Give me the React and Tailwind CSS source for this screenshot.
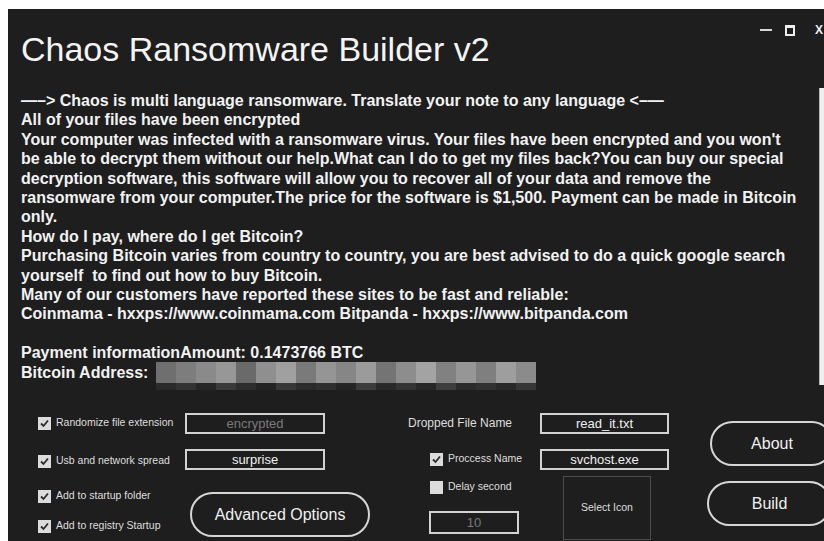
const NOTE_LINES = [
  '—–> Chaos is multi language ransomware. Translate your note to any language <–—',
  'All of your files have been encrypted',
  "Your computer was infected with a ransomware virus. Your files have been encrypted and you won't",
  'be able to decrypt them without our help.What can I do to get my files back?You can buy our special',
  'decryption software, this software will allow you to recover all of your data and remove the',
  'ransomware from your computer.The price for the software is $1,500. Payment can be made in Bitcoin',
  'only.',
  'How do I pay, where do I get Bitcoin?',
  'Purchasing Bitcoin varies from country to country, you are best advised to do a quick google search',
  'yourself  to find out how to buy Bitcoin.',
  'Many of our customers have reported these sites to be fast and reliable:',
  'Coinmama - hxxps://www.coinmama.com Bitpanda - hxxps://www.bitpanda.com',
  ' ',
  'Payment informationAmount: 0.1473766 BTC',
];

// greys of the pixelated wallet address
const MOSAIC_TOP = ['#6f6f6f', '#7d7d7d', '#8a8a8a', '#979797', '#6a6a6a', '#8f8f8f', '#a0a0a0', '#7a7a7a', '#959595', '#868686', '#9b9b9b', '#747474', '#8d8d8d', '#a3a3a3', '#818181', '#969696', '#7f7f7f', '#9e9e9e', '#8b8b8b'];
const MOSAIC_BOTTOM = ['#2a2a2a', '#333333', '#262626', '#3a3a3a', '#2e2e2e', '#242424', '#383838', '#2b2b2b', '#303030', '#252525', '#3c3c3c', '#292929', '#343434', '#272727', '#3d3d3d', '#2c2c2c', '#313131', '#282828', '#363636'];

const CheckBox = ({ checked = true }) => (
  <span className="w-[13px] h-[13px] bg-[#dcdcdc] flex items-center justify-center shrink-0">
    {checked && (
      <svg width="11" height="11" viewBox="0 0 11 11">
        <path d="M2 5.5L4.5 8L9 2.5" fill="none" stroke="#2b2b2b" strokeWidth="1.8" />
      </svg>
    )}
  </span>
);

const Option = ({ label, checked, className = '' }) => (
  <div className={`h-[22px] flex items-center gap-[5px] ${className}`}>
    <CheckBox checked={checked} />
    <span className="text-[10.5px] text-[#dedede] whitespace-nowrap">{label}</span>
  </div>
);

const TextBox = ({ value, dim, className = '' }) => (
  <div
    className={`border-2 border-[#d2d2d2] flex items-center justify-center text-[13px] leading-none ${
      dim ? 'text-[#7a7a7a]' : 'text-[#f0f0f0]'
    } ${className}`}
  >
    {value}
  </div>
);

const PillButton = ({ children, className = '' }) => (
  <button className={`shrink-0 h-[45px] rounded-full border-2 border-[#d6d6d6] text-[16px] text-[#f0f0f0] flex items-center justify-center ${className}`}>
    {children}
  </button>
);

export default function App() {
  return (
    <div className="w-[824px] h-[541px] overflow-hidden bg-white pt-[9px] pl-[8px] font-['Liberation_Sans',Arial,sans-serif]">
      <div className="w-[816px] h-[532px] overflow-hidden bg-[#1e1e1e] text-[#f2f2f2] flex flex-col">
        {/* Title bar */}
        <div className="h-[79px] shrink-0 flex justify-between">
          <h1 className="pl-[13px] pt-[20px] text-[34px] leading-[40px] text-[#f4f4f4]">Chaos Ransomware Builder v2</h1>
          <div className="flex items-center h-[14px] mt-[14px] pr-[1px]">
            <div className="w-[12px] h-[2px] bg-[#d8d8d8]" />
            <div className="ml-[13px] w-[10px] h-[11px] border-2 border-t-[3px] border-[#eeeeee]" />
            <span className="ml-[20px] text-[12px] font-bold text-[#eeeeee] leading-none">X</span>
          </div>
        </div>

        {/* Ransom note */}
        <div className="h-[302px] shrink-0 flex">
          <div className="flex-1 pl-[13px] pt-[3px] text-[16px] font-bold leading-[19.4px] overflow-hidden">
            {NOTE_LINES.map((line, i) => (
              <div key={i} className="whitespace-pre">{line}</div>
            ))}
            <div className="flex items-center whitespace-pre h-[19.4px]">
              <span>Bitcoin Address: </span>
              <div className="relative ml-[3px] h-[21px] mt-[1px] flex">
                {MOSAIC_TOP.map((c, i) => (
                  <div key={i} className="w-[20px] h-[21px]" style={{ backgroundColor: c }} />
                ))}
                <div className="absolute left-0 top-[21px] flex">
                  {MOSAIC_BOTTOM.map((c, i) => (
                    <div key={i} className="w-[20px] h-[7px]" style={{ backgroundColor: c }} />
                  ))}
                </div>
              </div>
            </div>
          </div>
          <div className="w-[5px] h-[297px] shrink-0 bg-[#efefef] border-l border-[#b9b9b9]" />
        </div>

        {/* Builder options */}
        <div className="flex-1 flex pl-[30px]">
          <div className="w-[147px] shrink-0 flex flex-col">
            <Option label="Randomize file extension" className="mt-[22px]" />
            <Option label="Usb and network spread" className="mt-[16px]" />
            <Option label="Add to startup folder" className="mt-[13px]" />
            <Option label="Add to registry Startup" className="mt-[8px]" />
          </div>

          <div className="w-[185px] shrink-0 flex flex-col">
            <TextBox value="encrypted" dim className="mt-[23px] h-[21px] w-[140px]" />
            <TextBox value="surprise" className="mt-[15px] h-[21px] w-[140px]" />
            <PillButton className="mt-[22px] ml-[5px] w-[180px]">Advanced Options</PillButton>
          </div>

          <div className="ml-[38px] w-[132px] shrink-0 flex flex-col">
            <div className="mt-[22px] h-[22px] flex items-center text-[12px] text-[#dedede] whitespace-nowrap">Dropped File Name</div>
            <Option label="Proccess Name" className="mt-[14px] ml-[22px]" />
            <Option label="Delay second" checked={false} className="mt-[6px] ml-[22px]" />
            <TextBox value="10" dim className="mt-[13px] ml-[21px] h-[23px] w-[90px]" />
          </div>

          <div className="w-[129px] shrink-0 flex flex-col">
            <TextBox value="read_it.txt" className="mt-[23px] h-[21px] w-[129px]" />
            <TextBox value="svchost.exe" className="mt-[15px] h-[21px] w-[129px]" />
            <div className="mt-[6px] ml-[23px] w-[88px] h-[64px] border border-[#4c4c4c] flex items-center justify-center text-[10.5px] text-[#dedede]">
              Select Icon
            </div>
          </div>

          <div className="ml-[38px] shrink-0 flex flex-col">
            <PillButton className="mt-[31px] ml-[3px] w-[124px]">About</PillButton>
            <PillButton className="mt-[15px] w-[125px]">Build</PillButton>
          </div>
        </div>
      </div>
    </div>
  );
}
